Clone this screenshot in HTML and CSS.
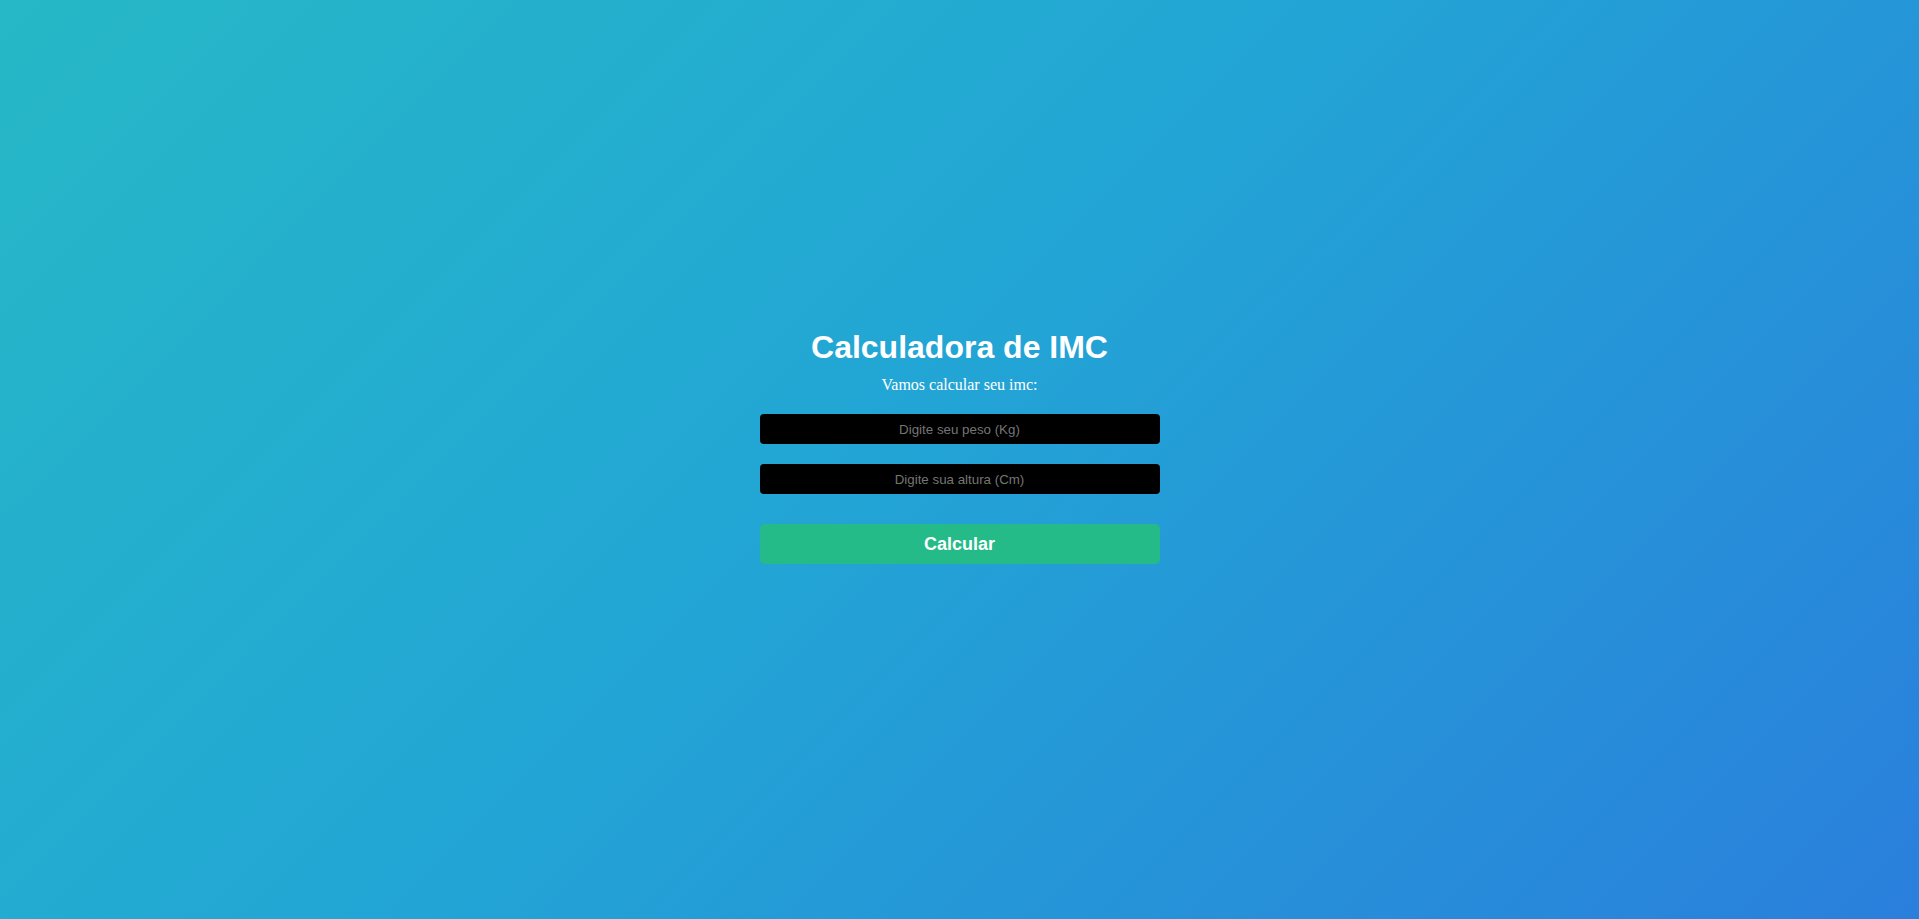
FILE: index.html
```html
<!DOCTYPE html>
<html lang="pt-BR">
<head>
<meta charset="utf-8">
<title>Calculadora de IMC</title>
<link rel="stylesheet" href="styles.css">
</head>
<body>
<main class="page">
  <section class="calc">
    <h1 class="title">Calculadora de IMC</h1>
    <p class="subtitle">Vamos calcular seu imc:</p>
    <input class="field" type="text" placeholder="Digite seu peso (Kg)">
    <input class="field field-second" type="text" placeholder="Digite sua altura (Cm)">
    <button class="btn" type="button">Calcular</button>
    <div class="result"></div>
  </section>
</main>
</body>
</html>
```

FILE: styles.css
```css
html, body {
  margin: 0;
  padding: 0;
  height: 100%;
}

body {
  background: linear-gradient(135deg, #26b8c6 0%, #22a6d5 45%, #2a7fdc 100%);
  font-family: "Liberation Serif", "Times New Roman", serif;
  color: #ffffff;
}

.page {
  min-height: 100vh;
  display: flex;
  align-items: center;
  justify-content: center;
}

.calc {
  width: 400px;
  display: flex;
  flex-direction: column;
  align-items: stretch;
  text-align: center;
}

.title {
  margin: 0;
  font-family: "Liberation Sans", Arial, sans-serif;
  font-size: 32px;
  font-weight: bold;
  line-height: 37px;
}

.subtitle {
  margin: 10px 0 0;
  font-size: 16px;
  line-height: 18px;
}

.field {
  margin-top: 20px;
  height: 30px;
  box-sizing: border-box;
  border: none;
  border-radius: 4px;
  background: #000000;
  color: #ffffff;
  text-align: center;
  font-family: "Liberation Sans", Arial, sans-serif;
  font-size: 13.333px;
  outline: none;
}

.field::placeholder {
  color: #757575;
}

.btn {
  margin-top: 30px;
  height: 40px;
  border: none;
  border-radius: 5px;
  background: #24bb88;
  color: #ffffff;
  font-family: "Liberation Sans", Arial, sans-serif;
  font-size: 18px;
  font-weight: bold;
  cursor: pointer;
}

.result {
  height: 26px;
}
```
